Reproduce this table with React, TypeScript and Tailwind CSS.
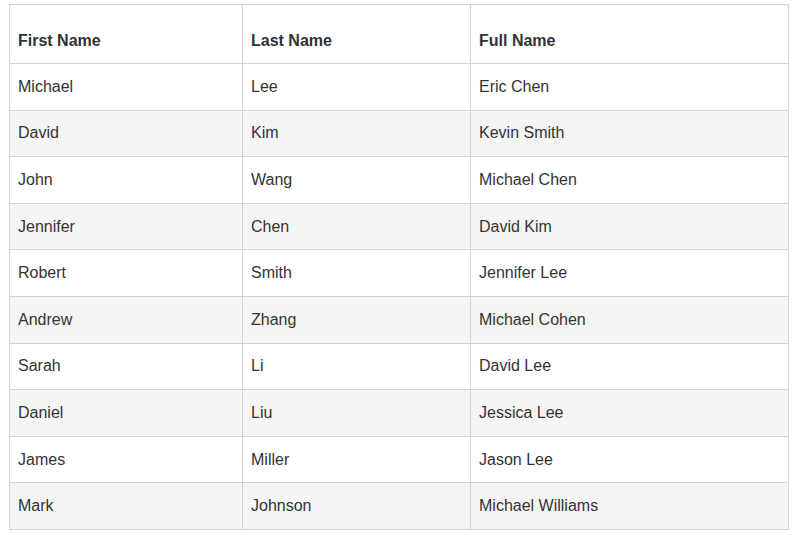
const rows: [string, string, string][] = [
  ['Michael', 'Lee', 'Eric Chen'],
  ['David', 'Kim', 'Kevin Smith'],
  ['John', 'Wang', 'Michael Chen'],
  ['Jennifer', 'Chen', 'David Kim'],
  ['Robert', 'Smith', 'Jennifer Lee'],
  ['Andrew', 'Zhang', 'Michael Cohen'],
  ['Sarah', 'Li', 'David Lee'],
  ['Daniel', 'Liu', 'Jessica Lee'],
  ['James', 'Miller', 'Jason Lee'],
  ['Mark', 'Johnson', 'Michael Williams'],
];

const App = () => {
  return (
    <div className="bg-white pt-[4px] pl-[9px] font-['Liberation_Sans',Arial,sans-serif] text-[16px] text-[#333]">
      <table className="w-[780px] border-collapse table-fixed">
        <colgroup>
          <col className="w-[233px]" />
          <col className="w-[228px]" />
          <col />
        </colgroup>
        <thead>
          <tr className="h-[59px]">
            {['First Name', 'Last Name', 'Full Name'].map((h) => (
              <th
                key={h}
                className="border border-[#d4d4d4] px-[8px] pt-[24px] pb-[10px] text-left align-bottom font-bold leading-6 text-[#2f3338]"
              >
                {h}
              </th>
            ))}
          </tr>
        </thead>
        <tbody>
          {rows.map((r, i) => (
            <tr key={i} className={`h-[46.6px] ${i % 2 === 1 ? 'bg-[#f5f5f3]' : 'bg-white'}`}>
              {r.map((c, j) => (
                <td key={j} className="border border-[#d4d4d4] px-[8px] py-0 leading-6 align-middle">
                  {c}
                </td>
              ))}
            </tr>
          ))}
        </tbody>
      </table>
    </div>
  );
};

export default App;
